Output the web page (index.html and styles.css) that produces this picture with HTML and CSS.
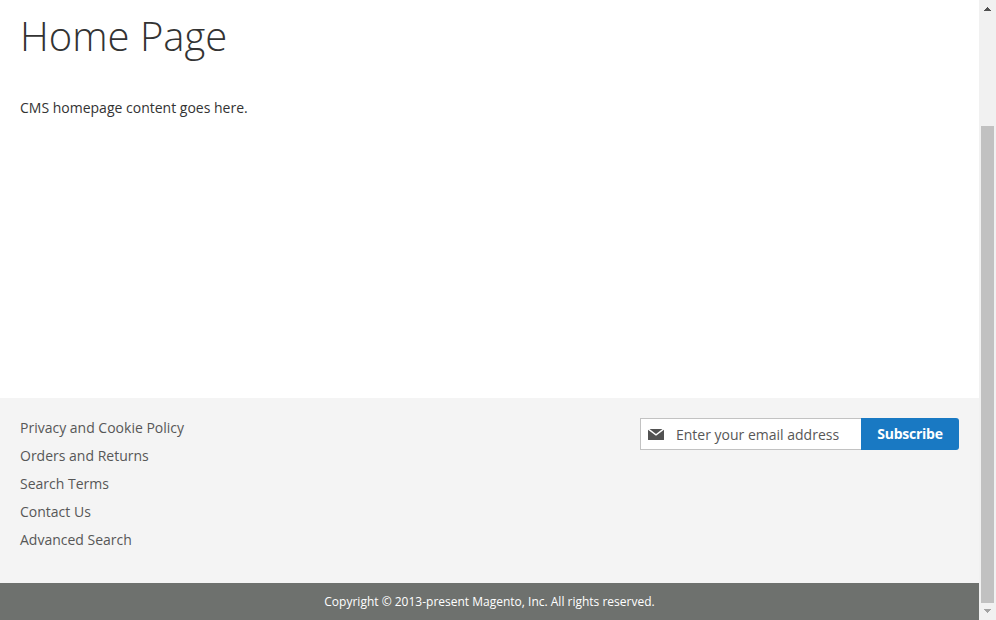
FILE: index.html
```html
<!DOCTYPE html>
<html lang="en">
<head>
<meta charset="utf-8">
<title>Home Page</title>
<link rel="stylesheet" href="styles.css">
</head>
<body>
<div class="window">
  <div class="page">
    <main class="main">
      <h1 class="title">Home Page</h1>
      <p class="content">CMS homepage content goes here.</p>
    </main>
    <footer class="footer">
      <ul class="links">
        <li><a>Privacy and Cookie Policy</a></li>
        <li><a>Orders and Returns</a></li>
        <li><a>Search Terms</a></li>
        <li><a>Contact Us</a></li>
        <li><a>Advanced Search</a></li>
      </ul>
      <form class="newsletter">
        <label class="field">
          <svg class="mail" width="16" height="11" viewBox="0 0 16 11"><path d="M1.500 0H14.500L8 4.900Z"/><path d="M0 0.700L8 6.700L16 0.700V10.500Q16 11 15.500 11H0.500Q0 11 0 10.500Z"/></svg>
          <input class="email" type="email" placeholder="Enter your email address">
        </label>
        <button class="subscribe" type="button">Subscribe</button>
      </form>
    </footer>
    <small class="copyright">Copyright © 2013-present Magento, Inc. All rights reserved.</small>
  </div>
  <div class="scrollbar">
    <svg class="arrow" width="17" height="17" viewBox="0 0 17 17"><path class="up" d="M8 7h1v1h1v1h1v1h1v1H5v-1h1V9h1V8h1Z"/></svg>
    <div class="track"><div class="thumb"></div></div>
    <svg class="arrow" width="17" height="17" viewBox="0 0 17 17"><path class="down" d="M5 6h7v1h-1v1h-1v1H9v1H8V9H7V8H6V7H5Z"/></svg>
  </div>
</div>
</body>
</html>
```
FILE: styles.css
```css
* { box-sizing: border-box; }
body { margin: 0; font: 14px/20px "Open Sans", sans-serif; color: #333; background: #fff; overflow: hidden; }
.window { display: flex; height: 620px; }
.page { flex: 1; display: flex; flex-direction: column; }
.main { flex: 1; padding: 14px 20px 0; }
.title { margin: 0; font-size: 40px; line-height: 44px; font-weight: 300; }
.content { margin: 40px 0 0; }
.footer { display: flex; justify-content: space-between; align-items: flex-start; height: 185px; padding: 20px 20px 0; background: #f4f4f4; }
.links { margin: 0; padding: 0; list-style: none; color: #575757; }
.links li { margin-bottom: 8px; }
.newsletter { display: flex; width: 319px; height: 32px; }
.field { flex: 1; display: flex; align-items: center; padding-left: 7px; background: #fff; border: 1px solid #c2c2c2; border-right: 0; }
.mail { fill: #525252; }
.email { flex: 1; min-width: 0; height: 30px; margin: 0; padding: 0 0 0 12px; border: 0; outline: 0; background: none; font: inherit; }
.email::placeholder { color: #575757; opacity: 1; }
.subscribe { width: 98px; padding: 0; border: 0; border-radius: 0 3px 3px 0; background: #1979c3; color: #fff; font: 700 14px/20px "Open Sans", sans-serif; letter-spacing: -0.25px; }
.copyright { height: 37px; background: #6e716e; color: #fff; font-size: 12px; line-height: 37px; text-align: center; }
.scrollbar { display: flex; flex-direction: column; width: 17px; background: #f1f1f1; }
.arrow { display: block; }
.up { fill: #505050; }
.down { fill: #a3a3a3; }
.track { flex: 1; padding: 109px 2px 0; }
.thumb { height: 477px; background: #c1c1c1; }
```
